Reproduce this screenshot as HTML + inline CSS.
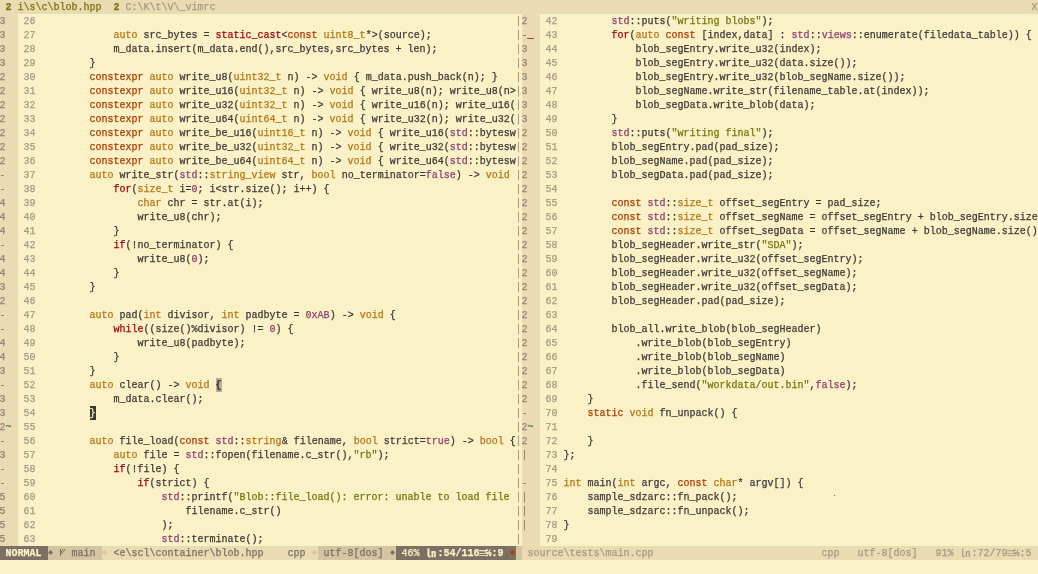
<!DOCTYPE html>
<html><head><meta charset="utf-8"><title>vim</title>
<style>
html,body{margin:0;padding:0;}
body{width:1038px;height:574px;overflow:hidden;background:#fbf1c7;position:relative;
 font-family:"Liberation Mono", "DejaVu Sans Mono", monospace;font-size:10px;line-height:14px;letter-spacing:0;color:#3c3836;}
.r{position:absolute;white-space:pre;height:14px;margin-left:-0.5px;}
.b{position:absolute;}
#scr{position:absolute;left:0;top:0;width:1038px;height:574px;will-change:opacity;-webkit-text-stroke:0.25px;}
.fc{color:#928374;}
.ln{color:#a89984;}
.vs{color:#a89984;}
.y{color:#b57614;}
.o{color:#af3a03;}
.r_{color:#9d0006;}
.rr{color:#9d0006;}
.p{color:#8f3f71;}
.g{color:#79740e;}
.a{color:#427b58;}
.mp{font-weight:bold;}
.cur{color:#fbf1c7;}
.bold{font-weight:bold;}
.sym{font-family:"Noto Sans CJK JP","Noto Sans CJK SC",sans-serif;letter-spacing:0;}
.sym2{font-family:"DejaVu Sans",sans-serif;font-size:10px;letter-spacing:0;transform:scaleY(0.75);}
.tl{color:#79740e;}
.ti{color:#a89984;}
</style></head><body><div id="scr">
<div class="b" style="left:0;top:0;width:1038px;height:14px;background:#ebdbb2"></div>
<div class="b" style="left:0;top:14px;width:18px;height:532px;background:#ebdbb2"></div>
<div class="b" style="left:522px;top:14px;width:18px;height:532px;background:#ebdbb2"></div>
<div class="b" style="left:216px;top:378px;width:6px;height:14px;background:#bdae93"></div>
<div class="b" style="left:90px;top:406px;width:6px;height:14px;background:#3c3836"></div>
<div class="r tl" style="top:1px;left:6px"><b>2</b> i\s\c\blob.hpp</div>
<div class="r ti" style="top:1px;left:114px"><b class="tl">2</b> C:\K\t\V\_vimrc</div>
<div class="r ti" style="top:1px;left:1032px">X</div>
<div class="r fc" style="top:15px;left:0px">3</div>
<div class="r ln" style="top:15px;left:18px"> 26 </div>
<div class="r " style="top:15px;left:42px"></div>
<div class="r vs" style="top:15px;left:516px">|</div>
<div class="r fc" style="top:29px;left:0px">3</div>
<div class="r ln" style="top:29px;left:18px"> 27 </div>
<div class="r " style="top:29px;left:42px">            <span class="y">auto</span> src_bytes = <span class="r_">static_cast</span>&lt;<span class="o">const</span> <span class="y">uint8_t</span>*&gt;(source);</div>
<div class="r vs" style="top:29px;left:516px">|</div>
<div class="r fc" style="top:43px;left:0px">3</div>
<div class="r ln" style="top:43px;left:18px"> 28 </div>
<div class="r " style="top:43px;left:42px">            m_data.insert(m_data.end(),src_bytes,src_bytes + len);</div>
<div class="r vs" style="top:43px;left:516px">|</div>
<div class="r fc" style="top:57px;left:0px">3</div>
<div class="r ln" style="top:57px;left:18px"> 29 </div>
<div class="r " style="top:57px;left:42px">        }</div>
<div class="r vs" style="top:57px;left:516px">|</div>
<div class="r fc" style="top:71px;left:0px">2</div>
<div class="r ln" style="top:71px;left:18px"> 30 </div>
<div class="r " style="top:71px;left:42px">        <span class="o">constexpr</span> <span class="y">auto</span> write_u8(<span class="y">uint32_t</span> n) -&gt; <span class="y">void</span> { m_data.push_back(n); }</div>
<div class="r vs" style="top:71px;left:516px">|</div>
<div class="r fc" style="top:85px;left:0px">2</div>
<div class="r ln" style="top:85px;left:18px"> 31 </div>
<div class="r " style="top:85px;left:42px">        <span class="o">constexpr</span> <span class="y">auto</span> write_u16(<span class="y">uint32_t</span> n) -&gt; <span class="y">void</span> { write_u8(n); write_u8(n&gt;</div>
<div class="r vs" style="top:85px;left:516px">|</div>
<div class="r fc" style="top:99px;left:0px">2</div>
<div class="r ln" style="top:99px;left:18px"> 32 </div>
<div class="r " style="top:99px;left:42px">        <span class="o">constexpr</span> <span class="y">auto</span> write_u32(<span class="y">uint32_t</span> n) -&gt; <span class="y">void</span> { write_u16(n); write_u16(</div>
<div class="r vs" style="top:99px;left:516px">|</div>
<div class="r fc" style="top:113px;left:0px">2</div>
<div class="r ln" style="top:113px;left:18px"> 33 </div>
<div class="r " style="top:113px;left:42px">        <span class="o">constexpr</span> <span class="y">auto</span> write_u64(<span class="y">uint64_t</span> n) -&gt; <span class="y">void</span> { write_u32(n); write_u32(</div>
<div class="r vs" style="top:113px;left:516px">|</div>
<div class="r fc" style="top:127px;left:0px">2</div>
<div class="r ln" style="top:127px;left:18px"> 34 </div>
<div class="r " style="top:127px;left:42px">        <span class="o">constexpr</span> <span class="y">auto</span> write_be_u16(<span class="y">uint16_t</span> n) -&gt; <span class="y">void</span> { write_u16(<span class="p">std</span>::bytesw</div>
<div class="r vs" style="top:127px;left:516px">|</div>
<div class="r fc" style="top:141px;left:0px">2</div>
<div class="r ln" style="top:141px;left:18px"> 35 </div>
<div class="r " style="top:141px;left:42px">        <span class="o">constexpr</span> <span class="y">auto</span> write_be_u32(<span class="y">uint32_t</span> n) -&gt; <span class="y">void</span> { write_u32(<span class="p">std</span>::bytesw</div>
<div class="r vs" style="top:141px;left:516px">|</div>
<div class="r fc" style="top:155px;left:0px">2</div>
<div class="r ln" style="top:155px;left:18px"> 36 </div>
<div class="r " style="top:155px;left:42px">        <span class="o">constexpr</span> <span class="y">auto</span> write_be_u64(<span class="y">uint64_t</span> n) -&gt; <span class="y">void</span> { write_u64(<span class="p">std</span>::bytesw</div>
<div class="r vs" style="top:155px;left:516px">|</div>
<div class="r fc" style="top:169px;left:0px">-</div>
<div class="r ln" style="top:169px;left:18px"> 37 </div>
<div class="r " style="top:169px;left:42px">        <span class="y">auto</span> write_str(<span class="p">std</span>::<span class="y">string_view</span> str, <span class="y">bool</span> no_terminator=<span class="p">false</span>) -&gt; <span class="y">void</span> </div>
<div class="r vs" style="top:169px;left:516px">|</div>
<div class="r fc" style="top:183px;left:0px">-</div>
<div class="r ln" style="top:183px;left:18px"> 38 </div>
<div class="r " style="top:183px;left:42px">            <span class="r_">for</span>(<span class="y">size_t</span> i=<span class="p">0</span>; i&lt;str.size(); i++) {</div>
<div class="r vs" style="top:183px;left:516px">|</div>
<div class="r fc" style="top:197px;left:0px">4</div>
<div class="r ln" style="top:197px;left:18px"> 39 </div>
<div class="r " style="top:197px;left:42px">                <span class="y">char</span> chr = str.at(i);</div>
<div class="r vs" style="top:197px;left:516px">|</div>
<div class="r fc" style="top:211px;left:0px">4</div>
<div class="r ln" style="top:211px;left:18px"> 40 </div>
<div class="r " style="top:211px;left:42px">                write_u8(chr);</div>
<div class="r vs" style="top:211px;left:516px">|</div>
<div class="r fc" style="top:225px;left:0px">4</div>
<div class="r ln" style="top:225px;left:18px"> 41 </div>
<div class="r " style="top:225px;left:42px">            }</div>
<div class="r vs" style="top:225px;left:516px">|</div>
<div class="r fc" style="top:239px;left:0px">-</div>
<div class="r ln" style="top:239px;left:18px"> 42 </div>
<div class="r " style="top:239px;left:42px">            <span class="r_">if</span>(!no_terminator) {</div>
<div class="r vs" style="top:239px;left:516px">|</div>
<div class="r fc" style="top:253px;left:0px">4</div>
<div class="r ln" style="top:253px;left:18px"> 43 </div>
<div class="r " style="top:253px;left:42px">                write_u8(<span class="p">0</span>);</div>
<div class="r vs" style="top:253px;left:516px">|</div>
<div class="r fc" style="top:267px;left:0px">4</div>
<div class="r ln" style="top:267px;left:18px"> 44 </div>
<div class="r " style="top:267px;left:42px">            }</div>
<div class="r vs" style="top:267px;left:516px">|</div>
<div class="r fc" style="top:281px;left:0px">3</div>
<div class="r ln" style="top:281px;left:18px"> 45 </div>
<div class="r " style="top:281px;left:42px">        }</div>
<div class="r vs" style="top:281px;left:516px">|</div>
<div class="r fc" style="top:295px;left:0px">2</div>
<div class="r ln" style="top:295px;left:18px"> 46 </div>
<div class="r " style="top:295px;left:42px"></div>
<div class="r vs" style="top:295px;left:516px">|</div>
<div class="r fc" style="top:309px;left:0px">-</div>
<div class="r ln" style="top:309px;left:18px"> 47 </div>
<div class="r " style="top:309px;left:42px">        <span class="y">auto</span> pad(<span class="y">int</span> divisor, <span class="y">int</span> padbyte = <span class="p">0xAB</span>) -&gt; <span class="y">void</span> {</div>
<div class="r vs" style="top:309px;left:516px">|</div>
<div class="r fc" style="top:323px;left:0px">-</div>
<div class="r ln" style="top:323px;left:18px"> 48 </div>
<div class="r " style="top:323px;left:42px">            <span class="r_">while</span>((size()%divisor) != <span class="p">0</span>) {</div>
<div class="r vs" style="top:323px;left:516px">|</div>
<div class="r fc" style="top:337px;left:0px">4</div>
<div class="r ln" style="top:337px;left:18px"> 49 </div>
<div class="r " style="top:337px;left:42px">                write_u8(padbyte);</div>
<div class="r vs" style="top:337px;left:516px">|</div>
<div class="r fc" style="top:351px;left:0px">4</div>
<div class="r ln" style="top:351px;left:18px"> 50 </div>
<div class="r " style="top:351px;left:42px">            }</div>
<div class="r vs" style="top:351px;left:516px">|</div>
<div class="r fc" style="top:365px;left:0px">3</div>
<div class="r ln" style="top:365px;left:18px"> 51 </div>
<div class="r " style="top:365px;left:42px">        }</div>
<div class="r vs" style="top:365px;left:516px">|</div>
<div class="r fc" style="top:379px;left:0px">-</div>
<div class="r ln" style="top:379px;left:18px"> 52 </div>
<div class="r " style="top:379px;left:42px">        <span class="y">auto</span> clear() -&gt; <span class="y">void</span> <span class="mp">{</span></div>
<div class="r vs" style="top:379px;left:516px">|</div>
<div class="r fc" style="top:393px;left:0px">3</div>
<div class="r ln" style="top:393px;left:18px"> 53 </div>
<div class="r " style="top:393px;left:42px">            m_data.clear();</div>
<div class="r vs" style="top:393px;left:516px">|</div>
<div class="r fc" style="top:407px;left:0px">3</div>
<div class="r ln" style="top:407px;left:18px"> 54 </div>
<div class="r " style="top:407px;left:42px">        <span class="cur">}</span></div>
<div class="r vs" style="top:407px;left:516px">|</div>
<div class="r fc" style="top:421px;left:0px">2<span class="a">~</span></div>
<div class="r ln" style="top:421px;left:18px"> 55 </div>
<div class="r " style="top:421px;left:42px"></div>
<div class="r vs" style="top:421px;left:516px">|</div>
<div class="r fc" style="top:435px;left:0px">-</div>
<div class="r ln" style="top:435px;left:18px"> 56 </div>
<div class="r " style="top:435px;left:42px">        <span class="y">auto</span> file_load(<span class="o">const</span> <span class="p">std</span>::<span class="y">string</span>&amp; filename, <span class="y">bool</span> strict=<span class="p">true</span>) -&gt; <span class="y">bool</span> {</div>
<div class="r vs" style="top:435px;left:516px">|</div>
<div class="r fc" style="top:449px;left:0px">3</div>
<div class="r ln" style="top:449px;left:18px"> 57 </div>
<div class="r " style="top:449px;left:42px">            <span class="y">auto</span> file = <span class="p">std</span>::fopen(filename.c_str(),<span class="g">"rb"</span>);</div>
<div class="r vs" style="top:449px;left:516px">|</div>
<div class="r fc" style="top:463px;left:0px">-</div>
<div class="r ln" style="top:463px;left:18px"> 58 </div>
<div class="r " style="top:463px;left:42px">            <span class="r_">if</span>(!file) {</div>
<div class="r vs" style="top:463px;left:516px">|</div>
<div class="r fc" style="top:477px;left:0px">-</div>
<div class="r ln" style="top:477px;left:18px"> 59 </div>
<div class="r " style="top:477px;left:42px">                <span class="r_">if</span>(strict) {</div>
<div class="r vs" style="top:477px;left:516px">|</div>
<div class="r fc" style="top:491px;left:0px">5</div>
<div class="r ln" style="top:491px;left:18px"> 60 </div>
<div class="r " style="top:491px;left:42px">                    <span class="p">std</span>::printf(<span class="g">"Blob::file_load(): error: unable to load file </span></div>
<div class="r vs" style="top:491px;left:516px">|</div>
<div class="r fc" style="top:505px;left:0px">5</div>
<div class="r ln" style="top:505px;left:18px"> 61 </div>
<div class="r " style="top:505px;left:42px">                        filename.c_str()</div>
<div class="r vs" style="top:505px;left:516px">|</div>
<div class="r fc" style="top:519px;left:0px">5</div>
<div class="r ln" style="top:519px;left:18px"> 62 </div>
<div class="r " style="top:519px;left:42px">                    );</div>
<div class="r vs" style="top:519px;left:516px">|</div>
<div class="r fc" style="top:533px;left:0px">5</div>
<div class="r ln" style="top:533px;left:18px"> 63 </div>
<div class="r " style="top:533px;left:42px">                    <span class="p">std</span>::terminate();</div>
<div class="r vs" style="top:533px;left:516px">|</div>
<div class="r fc" style="top:15px;left:522px">2</div>
<div class="r ln" style="top:15px;left:540px"> 42 </div>
<div class="r " style="top:15px;left:564px">        <span class="p">std</span>::puts(<span class="g">"writing blobs"</span>);</div>
<div class="r fc" style="top:29px;left:522px">-<span class="rr">_</span></div>
<div class="r ln" style="top:29px;left:540px"> 43 </div>
<div class="r " style="top:29px;left:564px">        <span class="r_">for</span>(<span class="y">auto</span> <span class="o">const</span> [index,data] : <span class="p">std</span>::<span class="p">views</span>::enumerate(filedata_table)) {</div>
<div class="r fc" style="top:43px;left:522px">3</div>
<div class="r ln" style="top:43px;left:540px"> 44 </div>
<div class="r " style="top:43px;left:564px">            blob_segEntry.write_u32(index);</div>
<div class="r fc" style="top:57px;left:522px">3</div>
<div class="r ln" style="top:57px;left:540px"> 45 </div>
<div class="r " style="top:57px;left:564px">            blob_segEntry.write_u32(data.size());</div>
<div class="r fc" style="top:71px;left:522px">3</div>
<div class="r ln" style="top:71px;left:540px"> 46 </div>
<div class="r " style="top:71px;left:564px">            blob_segEntry.write_u32(blob_segName.size());</div>
<div class="r fc" style="top:85px;left:522px">3</div>
<div class="r ln" style="top:85px;left:540px"> 47 </div>
<div class="r " style="top:85px;left:564px">            blob_segName.write_str(filename_table.at(index));</div>
<div class="r fc" style="top:99px;left:522px">3</div>
<div class="r ln" style="top:99px;left:540px"> 48 </div>
<div class="r " style="top:99px;left:564px">            blob_segData.write_blob(data);</div>
<div class="r fc" style="top:113px;left:522px">3</div>
<div class="r ln" style="top:113px;left:540px"> 49 </div>
<div class="r " style="top:113px;left:564px">        }</div>
<div class="r fc" style="top:127px;left:522px">2</div>
<div class="r ln" style="top:127px;left:540px"> 50 </div>
<div class="r " style="top:127px;left:564px">        <span class="p">std</span>::puts(<span class="g">"writing final"</span>);</div>
<div class="r fc" style="top:141px;left:522px">2</div>
<div class="r ln" style="top:141px;left:540px"> 51 </div>
<div class="r " style="top:141px;left:564px">        blob_segEntry.pad(pad_size);</div>
<div class="r fc" style="top:155px;left:522px">2</div>
<div class="r ln" style="top:155px;left:540px"> 52 </div>
<div class="r " style="top:155px;left:564px">        blob_segName.pad(pad_size);</div>
<div class="r fc" style="top:169px;left:522px">2</div>
<div class="r ln" style="top:169px;left:540px"> 53 </div>
<div class="r " style="top:169px;left:564px">        blob_segData.pad(pad_size);</div>
<div class="r fc" style="top:183px;left:522px">2</div>
<div class="r ln" style="top:183px;left:540px"> 54 </div>
<div class="r " style="top:183px;left:564px"></div>
<div class="r fc" style="top:197px;left:522px">2</div>
<div class="r ln" style="top:197px;left:540px"> 55 </div>
<div class="r " style="top:197px;left:564px">        <span class="o">const</span> <span class="p">std</span>::<span class="y">size_t</span> offset_segEntry = pad_size;</div>
<div class="r fc" style="top:211px;left:522px">2</div>
<div class="r ln" style="top:211px;left:540px"> 56 </div>
<div class="r " style="top:211px;left:564px">        <span class="o">const</span> <span class="p">std</span>::<span class="y">size_t</span> offset_segName = offset_segEntry + blob_segEntry.size</div>
<div class="r fc" style="top:225px;left:522px">2</div>
<div class="r ln" style="top:225px;left:540px"> 57 </div>
<div class="r " style="top:225px;left:564px">        <span class="o">const</span> <span class="p">std</span>::<span class="y">size_t</span> offset_segData = offset_segName + blob_segName.size()</div>
<div class="r fc" style="top:239px;left:522px">2</div>
<div class="r ln" style="top:239px;left:540px"> 58 </div>
<div class="r " style="top:239px;left:564px">        blob_segHeader.write_str(<span class="g">"SDA"</span>);</div>
<div class="r fc" style="top:253px;left:522px">2</div>
<div class="r ln" style="top:253px;left:540px"> 59 </div>
<div class="r " style="top:253px;left:564px">        blob_segHeader.write_u32(offset_segEntry);</div>
<div class="r fc" style="top:267px;left:522px">2</div>
<div class="r ln" style="top:267px;left:540px"> 60 </div>
<div class="r " style="top:267px;left:564px">        blob_segHeader.write_u32(offset_segName);</div>
<div class="r fc" style="top:281px;left:522px">2</div>
<div class="r ln" style="top:281px;left:540px"> 61 </div>
<div class="r " style="top:281px;left:564px">        blob_segHeader.write_u32(offset_segData);</div>
<div class="r fc" style="top:295px;left:522px">2</div>
<div class="r ln" style="top:295px;left:540px"> 62 </div>
<div class="r " style="top:295px;left:564px">        blob_segHeader.pad(pad_size);</div>
<div class="r fc" style="top:309px;left:522px">2</div>
<div class="r ln" style="top:309px;left:540px"> 63 </div>
<div class="r " style="top:309px;left:564px"></div>
<div class="r fc" style="top:323px;left:522px">2</div>
<div class="r ln" style="top:323px;left:540px"> 64 </div>
<div class="r " style="top:323px;left:564px">        blob_all.write_blob(blob_segHeader)</div>
<div class="r fc" style="top:337px;left:522px">2</div>
<div class="r ln" style="top:337px;left:540px"> 65 </div>
<div class="r " style="top:337px;left:564px">            .write_blob(blob_segEntry)</div>
<div class="r fc" style="top:351px;left:522px">2</div>
<div class="r ln" style="top:351px;left:540px"> 66 </div>
<div class="r " style="top:351px;left:564px">            .write_blob(blob_segName)</div>
<div class="r fc" style="top:365px;left:522px">2</div>
<div class="r ln" style="top:365px;left:540px"> 67 </div>
<div class="r " style="top:365px;left:564px">            .write_blob(blob_segData)</div>
<div class="r fc" style="top:379px;left:522px">2</div>
<div class="r ln" style="top:379px;left:540px"> 68 </div>
<div class="r " style="top:379px;left:564px">            .file_send(<span class="g">"workdata/out.bin"</span>,<span class="p">false</span>);</div>
<div class="r fc" style="top:393px;left:522px">2</div>
<div class="r ln" style="top:393px;left:540px"> 69 </div>
<div class="r " style="top:393px;left:564px">    }</div>
<div class="r fc" style="top:407px;left:522px">-</div>
<div class="r ln" style="top:407px;left:540px"> 70 </div>
<div class="r " style="top:407px;left:564px">    <span class="o">static</span> <span class="y">void</span> fn_unpack() {</div>
<div class="r fc" style="top:421px;left:522px">2<span class="a">~</span></div>
<div class="r ln" style="top:421px;left:540px"> 71 </div>
<div class="r " style="top:421px;left:564px"></div>
<div class="r fc" style="top:435px;left:522px">2</div>
<div class="r ln" style="top:435px;left:540px"> 72 </div>
<div class="r " style="top:435px;left:564px">    }</div>
<div class="r fc" style="top:449px;left:522px">|</div>
<div class="r ln" style="top:449px;left:540px"> 73 </div>
<div class="r " style="top:449px;left:564px">};</div>
<div class="r fc" style="top:463px;left:522px"></div>
<div class="r ln" style="top:463px;left:540px"> 74 </div>
<div class="r " style="top:463px;left:564px"></div>
<div class="r fc" style="top:477px;left:522px">-</div>
<div class="r ln" style="top:477px;left:540px"> 75 </div>
<div class="r " style="top:477px;left:564px"><span class="y">int</span> main(<span class="y">int</span> argc, <span class="o">const</span> <span class="y">char</span>* argv[]) {</div>
<div class="r fc" style="top:491px;left:522px">|</div>
<div class="r ln" style="top:491px;left:540px"> 76 </div>
<div class="r " style="top:491px;left:564px">    sample_sdzarc::fn_pack();</div>
<div class="r fc" style="top:505px;left:522px">|</div>
<div class="r ln" style="top:505px;left:540px"> 77 </div>
<div class="r " style="top:505px;left:564px">    sample_sdzarc::fn_unpack();</div>
<div class="r fc" style="top:519px;left:522px">|</div>
<div class="r ln" style="top:519px;left:540px"> 78 </div>
<div class="r " style="top:519px;left:564px">}</div>
<div class="r fc" style="top:533px;left:522px"></div>
<div class="r ln" style="top:533px;left:540px"> 79 </div>
<div class="r " style="top:533px;left:564px"></div>
<div class="b" style="left:834px;top:495px;width:1px;height:1px;background:#7c6f64"></div>
<!-- status line -->
<div class="b" style="left:0;top:546px;width:48px;height:14px;background:#7c6f64"></div>
<div class="b" style="left:48px;top:546px;width:54px;height:14px;background:#d5c4a1"></div>
<div class="b" style="left:102px;top:546px;width:216px;height:14px;background:#ebdbb2"></div>
<div class="b" style="left:318px;top:546px;width:78px;height:14px;background:#d5c4a1"></div>
<div class="b" style="left:396px;top:546px;width:120px;height:14px;background:#7c6f64"></div>
<div class="b" style="left:516px;top:546px;width:6px;height:14px;background:#d5c4a1"></div>
<div class="b" style="left:522px;top:546px;width:516px;height:14px;background:#ebdbb2"></div>
<div class="r bold" style="top:547px;left:6px;color:#fbf1c7">NORMAL</div>
<svg class="b" style="left:48px;top:550px" width="6" height="5" viewBox="0 0 6 5"><polygon points="0,2.5 2.5,0 5,2.5 2.5,5" fill="#7c6f64"/></svg>
<svg class="b" style="left:60px;top:549px" width="6" height="8" viewBox="0 0 6 8"><path d="M0.5 0V7M4.5 0V1.5L1 5M2.5 0V1.5L1 3" stroke="#7c6f64" stroke-width="1" fill="none"/></svg>
<div class="r" style="top:547px;left:72px;color:#7c6f64">main</div>
<svg class="b" style="left:102px;top:550px" width="6" height="5" viewBox="0 0 6 5"><polygon points="0,2.5 2.5,0 5,2.5 2.5,5" fill="#d5c4a1"/></svg>
<div class="r" style="top:547px;left:114px;color:#7c6f64">&lt;e\scl\container\blob.hpp</div>
<div class="r" style="top:547px;left:288px;color:#7c6f64">cpp</div>
<svg class="b" style="left:312px;top:550px" width="6" height="5" viewBox="0 0 6 5"><polygon points="0,2.5 2.5,0 5,2.5 2.5,5" fill="#d5c4a1"/></svg>
<div class="r" style="top:547px;left:324px;color:#7c6f64">utf-8[dos]</div>
<svg class="b" style="left:390px;top:550px" width="6" height="5" viewBox="0 0 6 5"><polygon points="0,2.5 2.5,0 5,2.5 2.5,5" fill="#7c6f64"/></svg>
<div class="r" style="top:547px;left:402px;color:#fbf1c7">46%</div>
<div class="r bold sym" style="top:546px;left:427px;color:#fbf1c7">㏑</div>
<div class="r bold" style="top:547px;left:438px;color:#fbf1c7">:54/116</div>
<div class="r bold sym2" style="top:547px;left:479px;color:#fbf1c7">☰</div>
<div class="r bold" style="top:547px;left:486px;color:#fbf1c7">℅:9</div>
<svg class="b" style="left:510px;top:550px" width="6" height="5" viewBox="0 0 6 5"><polygon points="0,2.5 2.5,0 5,2.5 2.5,5" fill="#af3a03"/></svg>
<div class="r" style="top:547px;left:528px;color:#a89984">source\tests\main.cpp</div>
<div class="r" style="top:547px;left:822px;color:#a89984">cpp</div>
<div class="r" style="top:547px;left:858px;color:#a89984">utf-8[dos]</div>
<div class="r" style="top:547px;left:936px;color:#a89984">91%</div>
<div class="r sym" style="top:546px;left:961px;color:#a89984">㏑</div>
<div class="r" style="top:547px;left:972px;color:#a89984">:72/79</div>
<div class="r sym2" style="top:547px;left:1007px;color:#a89984">☰</div>
<div class="r" style="top:547px;left:1014px;color:#a89984">℅:5</div>
</div></body></html>
